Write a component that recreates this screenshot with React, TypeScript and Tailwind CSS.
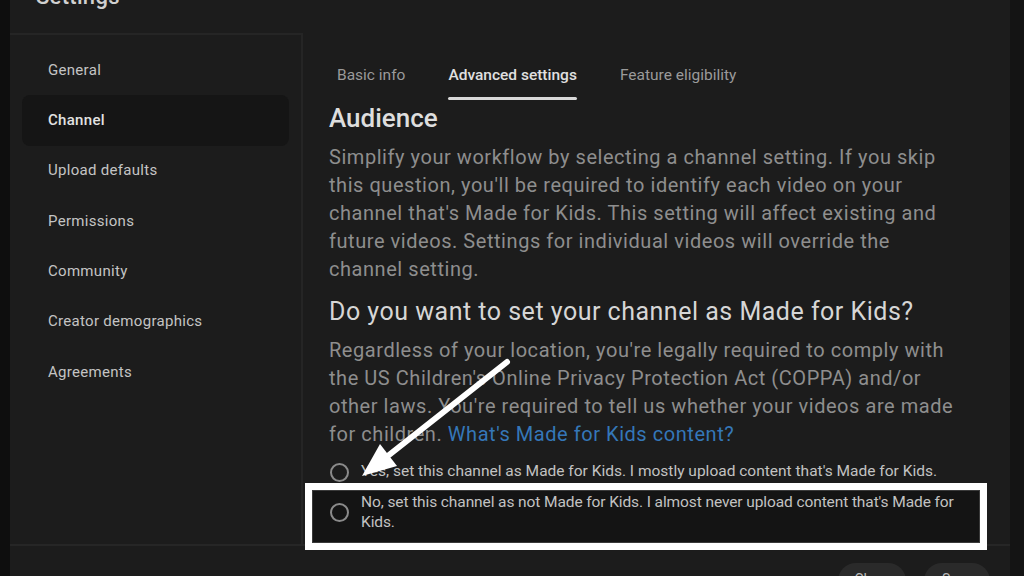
const NAV = [
  "General",
  "Channel",
  "Upload defaults",
  "Permissions",
  "Community",
  "Creator demographics",
  "Agreements",
];

const TABS = ["Basic info", "Advanced settings", "Feature eligibility"];

function Radio() {
  return <span className="w-[19px] h-[19px] rounded-full border-2 border-[#8a8a8a] shrink-0" />;
}

export default function App() {
  return (
    <div
      className="relative w-[1024px] h-[576px] overflow-hidden bg-[#0e0e0e] flex"
      style={{ fontFamily: "Roboto, 'Liberation Sans', sans-serif" }}
    >
      <div className="w-[10px] shrink-0" />

      {/* dialog */}
      <div className="w-[1000px] h-full overflow-hidden bg-[#1c1c1c] flex flex-col">
        <div className="h-[33px] shrink-0 pl-[26px]">
          <div className="-mt-[18px] text-[22px] font-medium text-[#d0d0d0] leading-[30px] tracking-[0.3px]">Settings</div>
        </div>

        <div className="h-[512px] shrink-0 flex">
          {/* sidebar */}
          <div className="w-[293px] shrink-0 border-t-2 border-r-2 border-[#252525] pt-[10px] flex flex-col">
            {NAV.map((n) => (
              <div
                key={n}
                className={`mx-[12px] h-[50.3px] rounded-lg flex items-center pl-[26px] text-[15px] tracking-[0.3px] ${
                  n === "Channel" ? "bg-[#151515] text-[#e2e2e2] font-medium" : "text-[#c4c4c4]"
                }`}
              >
                {n}
              </div>
            ))}
          </div>

          {/* content */}
          <div className="flex-1 pl-[26px] pr-[20px] flex flex-col">
            <div className="flex gap-[43px] pl-[8px] pt-[32px] h-[70px] shrink-0">
              {TABS.map((t) => (
                <div key={t} className="flex flex-col">
                  <span
                    className={`text-[15.5px] leading-[20px] ${
                      t === "Advanced settings" ? "text-[#e0e0e0] font-medium" : "text-[#9a9a9a]"
                    }`}
                  >
                    {t}
                  </span>
                  {t === "Advanced settings" && <span className="mt-[12px] h-[3px] bg-[#d8d8d8] rounded-full" />}
                </div>
              ))}
            </div>

            <h2 className="text-[26px] leading-[30px] font-medium text-[#dedede]">Audience</h2>
            <p className="mt-[10px] text-[20px] leading-[28px] text-[#8e8e8e] tracking-[0.55px] w-[628px]">
              Simplify your workflow by selecting a channel setting. If you skip this question, you'll be required to
              identify each video on your channel that's Made for Kids. This setting will affect existing and future
              videos. Settings for individual videos will override the channel setting.
            </p>

            <h2 className="mt-[14px] text-[25px] leading-[30px] text-[#d6d6d6] tracking-[0.5px]">
              Do you want to set your channel as Made for Kids?
            </h2>
            <p className="mt-[9px] text-[20px] leading-[28px] text-[#8e8e8e] tracking-[0.55px] w-[628px]">
              Regardless of your location, you're legally required to comply with the US Children's Online Privacy
              Protection Act (COPPA) and/or other laws. You're required to tell us whether your videos are made for
              children. <span className="text-[#3577b8]">What's Made for Kids content?</span>
            </p>

            <div className="mt-[14px] flex items-center gap-[12px] pl-[1px] h-[20px] shrink-0">
              <Radio />
              <span className="text-[15.5px] text-[#c2c2c2] whitespace-nowrap">
                Yes, set this channel as Made for Kids. I mostly upload content that's Made for Kids.
              </span>
            </div>

            {/* highlighted option */}
            <div className="relative z-10 mt-[1px] -ml-[24px] w-[682px] h-[67px] shrink-0 bg-white p-[7px]">
              <div className="h-full bg-[#141414] border border-[#3a3a3a] flex items-center gap-[12px] pl-[17px] pb-[9px]">
                <Radio />
                <span className="text-[15.5px] leading-[20px] text-[#c2c2c2] tracking-[-0.1px]">
                  No, set this channel as not Made for Kids. I almost never upload content that's Made for Kids.
                </span>
              </div>
            </div>
          </div>
        </div>

        {/* footer */}
        <div className="-mt-[1px] shrink-0 border-t-2 border-[#262626] flex justify-end gap-[18px] pr-[20px] pt-[17px]">
          <div className="w-[68px] h-[36px] rounded-full bg-[#2a2a2a] flex justify-center pt-[6px] text-[14px] text-[#bbb]">
            Close
          </div>
          <div className="w-[66px] h-[36px] rounded-full bg-[#2a2a2a] flex justify-center pt-[6px] text-[14px] text-[#bbb]">
            Save
          </div>
        </div>
      </div>

      <div className="flex-1 bg-[#141414]" />

      {/* annotation arrow */}
      <svg className="absolute inset-0 pointer-events-none" width="1024" height="576">
        <line x1="507" y1="362" x2="389" y2="455" stroke="white" strokeWidth="6" strokeLinecap="round" />
        <polygon points="362,476 397,466 380,444" fill="white" />
      </svg>
    </div>
  );
}
